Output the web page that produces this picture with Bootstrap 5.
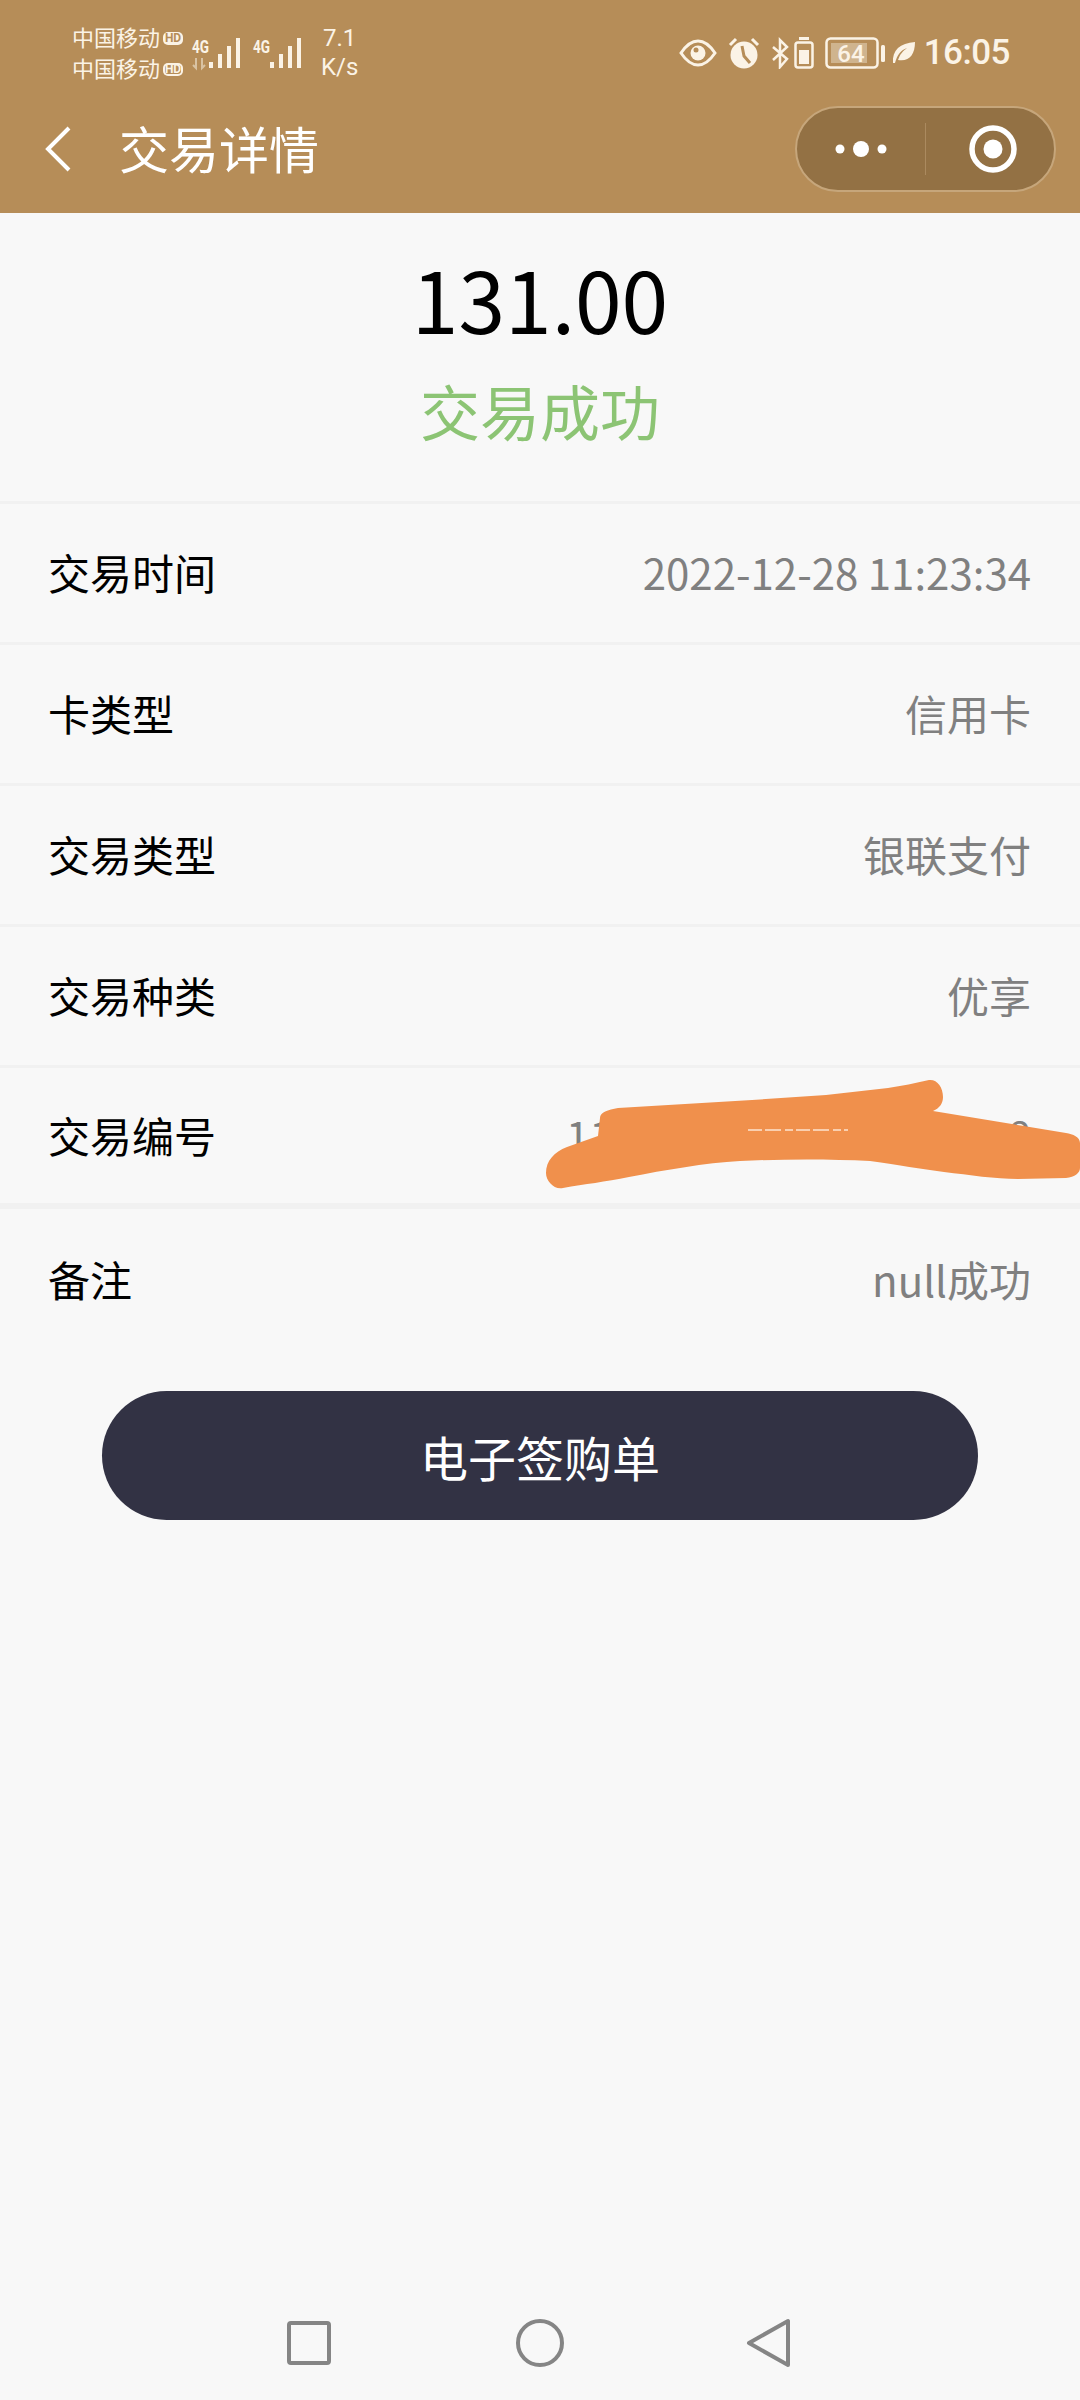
<!DOCTYPE html>
<html lang="zh-CN">
<head>
    <meta charset="UTF-8">
    <meta name="viewport" content="width=device-width, initial-scale=1.0">
    <title>交易详情</title>
    <link href="https://cdn.jsdelivr.net/npm/bootstrap@5.3.1/dist/css/bootstrap.min.css" rel="stylesheet">
    <style>
        body {
            background-color: #f8f8f8;
            font-family: "Noto Sans CJK SC", sans-serif;
            width: 1080px;
            height: 2400px;
            overflow: hidden;
        }

        /* Cabecalho */
        .top-head {
            background-color: #b68d58;
            height: 213px;
            color: #fff;
        }
        .status-line {
            height: 92px;
            padding: 21px 70px 0 72px;
            color: #fbf3e6;
        }
        .carrier {
            font-size: 22px;
            line-height: 31px;
        }
        .hd-tag {
            display: inline-block;
            font-family: Roboto, sans-serif;
            font-size: 12px;
            font-weight: 700;
            line-height: 13px;
            width: 20px;
            text-align: center;
            background: #fbf3e6;
            color: #b68d58;
            border-radius: 5px;
            margin-left: 3px;
            vertical-align: 4px;
        }
        .hd-tag.line-tag {
            background: transparent;
            color: #fbf3e6;
            box-shadow: inset 0 0 0 2px #fbf3e6;
        }
        .signal-icon {
            margin-left: 8px;
            margin-top: 15px;
        }
        .net-speed {
            font-family: Roboto, sans-serif;
            font-size: 24px;
            line-height: 29px;
            text-align: center;
            margin-left: 16px;
            margin-top: 3px;
        }
        .status-icons {
            margin-top: 14px;
        }
        .status-icons svg {
            display: block;
        }
        .sp-s { margin-left: 5px; }
        .sp-m { margin-left: 7px; }
        .sp-l { margin-left: 11px; }
        .clock-text {
            font-family: Roboto, sans-serif;
            font-size: 35px;
            font-weight: 500;
            letter-spacing: -.5px;
            line-height: 1;
            margin-left: 9px;
        }
        .title-line {
            height: 114px;
            padding: 0 24px 0 44px;
        }
        .title-text {
            font-size: 50px;
            line-height: 60px;
            margin-left: 47px;
            margin-top: -5px;
        }
        .capsule {
            width: 261px;
            height: 86px;
            border-radius: 43px;
            background: #937144;
            border: 2px solid #c6a67b;
        }
        .capsule-cell {
            flex: 1 1 0;
        }
        .capsule-sep {
            width: 1px;
            height: 52px;
            background: #ab8a5f;
        }
        .ring-icon {
            margin-left: 5px;
        }

        /* Valor */
        .amount-box {
            height: 291px;
            padding-top: 29px;
            text-align: center;
            border-bottom: 3px solid #f1f1f1;
        }
        .amount-num {
            font-size: 84px;
            line-height: 112px;
            color: #000;
        }
        .amount-state {
            font-size: 60px;
            line-height: 80px;
            margin-top: 16px;
            color: #8cc474;
        }

        /* Linhas */
        .info-row {
            height: 141px;
            padding: 0 49px 3px 48px;
            border-bottom: 3px solid #f1f1f1;
            font-size: 42px;
        }
        .info-row.thick {
            border-bottom-width: 6px;
        }
        .info-row.plain {
            border-bottom: 0;
        }
        .info-label {
            color: #000;
        }
        .info-value {
            color: #808080;
        }
        .serial-value {
            width: 465px;
        }

        /* Borrao */
        .scribble {
            position: absolute;
            left: 540px;
            top: 1075px;
        }

        .sign-btn {
            display: block;
            width: 876px;
            height: 129px;
            margin: 41px auto 0;
            background: #323244;
            border-radius: 65px;
            color: #fff;
            font-size: 48px;
            line-height: 1;
            border: 0;
        }

        .bottom-nav {
            position: absolute;
            left: 0;
            right: 0;
            top: 2316px;
            height: 54px;
        }
    </style>
</head>
<body class="position-relative">
    <header class="top-head">
        <div class="status-line d-flex justify-content-between align-items-start">
            <div class="d-flex align-items-start">
                <div class="carrier">
                    <div>中国移动<span class="hd-tag">HD</span></div>
                    <div>中国移动<span class="hd-tag line-tag">HD</span></div>
                </div>
                <svg class="signal-icon" width="114" height="36" viewBox="0 0 114 36" fill="#fbf3e6">
                    <text x="1" y="17" font-size="19" font-weight="700" font-family="Roboto" textLength="17" lengthAdjust="spacingAndGlyphs">4G</text>
                    <path d="M5 22v10M2 29l3 3V22M11 22v10l3-3" fill="none" stroke="#d9c3a3" stroke-width="2"/>
                    <rect x="18" y="26" width="4" height="6"/>
                    <rect x="27" y="18" width="4" height="14"/>
                    <rect x="36" y="10" width="4" height="22"/>
                    <rect x="45" y="2" width="4" height="30"/>
                    <text x="62" y="17" font-size="19" font-weight="700" font-family="Roboto" textLength="17" lengthAdjust="spacingAndGlyphs">4G</text>
                    <rect x="79" y="26" width="4" height="6"/>
                    <rect x="88" y="18" width="4" height="14"/>
                    <rect x="97" y="10" width="4" height="22"/>
                    <rect x="106" y="2" width="4" height="30"/>
                </svg>
                <div class="net-speed">7.1<br>K/s</div>
            </div>
            <div class="status-icons d-flex align-items-center">
                <svg width="38" height="28" viewBox="0 0 38 28" fill="none" stroke="#fbf3e6" stroke-width="3">
                    <path d="M2 14C8 5 13 2 19 2s11 3 17 12c-6 9-11 12-17 12S8 23 2 14z"/>
                    <circle cx="19" cy="14" r="7.5" fill="#fbf3e6" stroke="none"/>
                    <circle cx="17" cy="11" r="2.5" fill="#b68d58" stroke="none"/>
                </svg>
                <svg class="sp-l" width="32" height="32" viewBox="0 0 32 32">
                    <circle cx="16" cy="18" r="13.5" fill="#fbf3e6"/>
                    <path d="M14 9l2 10 6 7" stroke="#b68d58" stroke-width="3" fill="none"/>
                    <path d="M2 8l6-6M30 8l-6-6" stroke="#fbf3e6" stroke-width="3" fill="none"/>
                </svg>
                <svg class="sp-l" width="18" height="32" viewBox="0 0 18 32" fill="none" stroke="#fbf3e6" stroke-width="2.5">
                    <path d="M2 10l14 12-7 8V3l7 7L2 23"/>
                </svg>
                <svg class="sp-s" width="20" height="32" viewBox="0 0 20 32">
                    <rect x="5" y="0" width="10" height="3" fill="#fbf3e6"/>
                    <rect x="1.5" y="5.5" width="17" height="25" rx="2.5" fill="none" stroke="#fbf3e6" stroke-width="2.5"/>
                    <rect x="5" y="13" width="10" height="14" fill="#fbf3e6"/>
                </svg>
                <svg class="sp-l" width="60" height="32" viewBox="0 0 60 32">
                    <rect x="1.5" y="1.5" width="51" height="29" rx="4" fill="none" stroke="#fbf3e6" stroke-width="2.5"/>
                    <rect x="6" y="6" width="36" height="20" fill="#cfb48e"/>
                    <text x="26" y="25" text-anchor="middle" font-size="24" font-weight="500" font-family="Roboto" fill="#fbf3e6">64</text>
                    <rect x="56" y="8" width="4" height="17" rx="1.5" fill="#fbf3e6"/>
                </svg>
                <svg class="sp-m" width="23" height="23" viewBox="0 0 23 23">
                    <path d="M1 22C0 9 8 2 23 1c0 13-6 20-17 18C8 13 11 10 15 7 9 9 5 14 3 22z" fill="#fbf3e6"/>
                </svg>
                <span class="clock-text">16:05</span>
            </div>
        </div>
        <div class="title-line d-flex justify-content-between align-items-center">
            <div class="d-flex align-items-center">
                <svg width="28" height="48" viewBox="0 0 28 48" fill="none" stroke="#fff" stroke-width="4">
                    <path d="M25 3L4 24l21 21"/>
                </svg>
                <span class="title-text">交易详情</span>
            </div>
            <div class="capsule d-flex align-items-center">
                <div class="capsule-cell d-flex justify-content-center">
                    <svg width="52" height="20" viewBox="0 0 52 20" fill="#fff">
                        <circle cx="5" cy="10" r="4.5"/><circle cx="26" cy="10" r="8"/><circle cx="47" cy="10" r="4.5"/>
                    </svg>
                </div>
                <div class="capsule-sep"></div>
                <div class="capsule-cell d-flex justify-content-center">
                    <svg class="ring-icon" width="50" height="50" viewBox="0 0 50 50">
                        <circle cx="25" cy="25" r="21" fill="none" stroke="#fff" stroke-width="5.5"/>
                        <circle cx="25" cy="25" r="9.5" fill="#fff"/>
                    </svg>
                </div>
            </div>
        </div>
    </header>

    <section class="amount-box">
        <div class="amount-num">131.00</div>
        <div class="amount-state">交易成功</div>
    </section>

    <section>
        <div class="info-row d-flex justify-content-between align-items-center">
            <span class="info-label">交易时间</span><span class="info-value">2022-12-28 11:23:34</span>
        </div>
        <div class="info-row d-flex justify-content-between align-items-center">
            <span class="info-label">卡类型</span><span class="info-value">信用卡</span>
        </div>
        <div class="info-row d-flex justify-content-between align-items-center">
            <span class="info-label">交易类型</span><span class="info-value">银联支付</span>
        </div>
        <div class="info-row d-flex justify-content-between align-items-center">
            <span class="info-label">交易种类</span><span class="info-value">优享</span>
        </div>
        <div class="info-row thick d-flex justify-content-between align-items-center">
            <span class="info-label">交易编号</span>
            <span class="info-value serial-value d-flex justify-content-between"><span>11</span><span>8</span></span>
        </div>
        <div class="info-row plain d-flex justify-content-between align-items-center">
            <span class="info-label">备注</span><span class="info-value">null成功</span>
        </div>
    </section>

    <button type="button" class="btn sign-btn">电子签购单</button>

    <!-- mancha laranja sobre o numero -->
    <svg class="scribble" width="540" height="115" viewBox="0 0 540 115">
        <path d="M6 98C6 106 14 115 23 113C45 109 65 107 89 102C125 95 165 88 200 86C245 84 290 84 330 86C360 90 380 94 404 97C430 100 455 104 478 104L526 103C535 102 540 98 540 93L540 68C540 62 533 59 526 58L393 36C400 33 403 28 403 22C403 12 397 4 389 5C375 8 362 11 348 13L286 20L212 25L78 33C68 35 60 37 60 43L58 61L27 72C14 77 6 86 6 98z" fill="#f0904c"/>
        <path d="M208 55H308" stroke="#fde3cf" stroke-width="1.5" stroke-dasharray="14 3 16 4 8 3" fill="none"/>
    </svg>

    <nav class="bottom-nav d-flex justify-content-center">
        <svg width="520" height="54" viewBox="0 0 520 54" fill="none" stroke="#858585" stroke-width="4" stroke-linejoin="round">
            <rect x="9" y="7" width="40" height="40" rx="2"/>
            <circle cx="260" cy="27" r="22"/>
            <path d="M508 5v44L469 27z"/>
        </svg>
    </nav>

    <script src="https://cdn.jsdelivr.net/npm/bootstrap@5.3.1/dist/js/bootstrap.bundle.min.js"></script>
</body>
</html>
